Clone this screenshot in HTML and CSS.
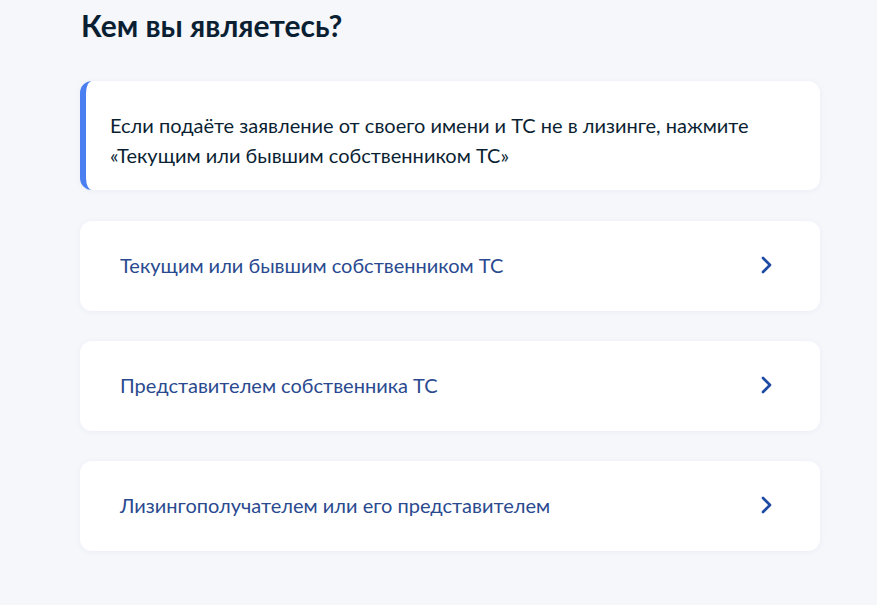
FILE: index.html
```html
<!DOCTYPE html>
<html lang="ru">
<head>
<meta charset="utf-8">
<link rel="stylesheet" href="styles.css">
</head>
<body>
<main class="page">
  <h1 class="title">Кем вы являетесь?</h1>
  <div class="info">
    <p>Если подаёте заявление от своего имени и ТС не в лизинге, нажмите «Текущим или бывшим собственником ТС»</p>
  </div>
  <a class="option" href="#"><span>Текущим или бывшим собственником ТС</span><svg class="chev" viewBox="0 0 12 20" width="12" height="20"><path d="M3 3l7 7-7 7" fill="none" stroke="#1d4ba3" stroke-width="2.7" stroke-linecap="round" stroke-linejoin="round"/></svg></a>
  <a class="option" href="#"><span>Представителем собственника ТС</span><svg class="chev" viewBox="0 0 12 20" width="12" height="20"><path d="M3 3l7 7-7 7" fill="none" stroke="#1d4ba3" stroke-width="2.7" stroke-linecap="round" stroke-linejoin="round"/></svg></a>
  <a class="option" href="#"><span>Лизингополучателем или его представителем</span><svg class="chev" viewBox="0 0 12 20" width="12" height="20"><path d="M3 3l7 7-7 7" fill="none" stroke="#1d4ba3" stroke-width="2.7" stroke-linecap="round" stroke-linejoin="round"/></svg></a>
</main>
</body>
</html>
```
FILE: styles.css
```css
html, body {
  margin: 0;
  padding: 0;
  background: #f5f7fb;
}
body {
  font-family: Lato, "Noto Sans", sans-serif;
  color: #0b1f33;
}
.page {
  width: 740px;
  margin-left: 80px;
  padding-top: 7px;
  display: flex;
  flex-direction: column;
}
.title {
  margin: 0 0 38px 1px;
  font-size: 30px;
  line-height: 36px;
  font-weight: 700;
  color: #0b1f33;
}
.info {
  background: #fff;
  border-radius: 12px;
  border-left: 6px solid #4a7ff2;
  padding: 29px 24px 20px 24px;
  box-shadow: 0 1px 6px rgba(30, 60, 120, 0.05);
  margin-bottom: 31px;
}
.info p {
  margin: 0;
  font-size: 20px;
  line-height: 30px;
  color: #0b1f33;
}
.option {
  display: flex;
  align-items: center;
  justify-content: space-between;
  height: 90px;
  box-sizing: border-box;
  padding: 0 48px 3px 40px;
  background: #fff;
  border-radius: 12px;
  box-shadow: 0 1px 6px rgba(30, 60, 120, 0.05);
  margin-bottom: 30px;
  text-decoration: none;
  color: #2a4a8f;
  font-size: 20px;
  line-height: 24px;
}
.chev {
  display: block;
  margin-top: 1px;
}
```
